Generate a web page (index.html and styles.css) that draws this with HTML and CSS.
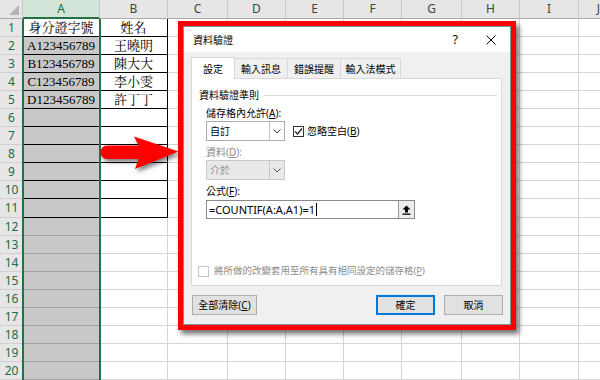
FILE: index.html
```html
<!DOCTYPE html>
<html lang="zh-Hant">
<head>
    <meta charset="UTF-8">
    <title>資料驗證</title>
    <link rel="stylesheet" href="styles.css">
</head>
<body>
<div class="screen">
    <!-- worksheet, cells filled in by the script below -->
    <div class="sheet" id="sheet"></div>
    <div class="selection"></div>

    <div class="frame">
        <div class="dialog">
            <div class="titlebar">
                <span class="title">資料驗證</span>
                <span class="help">?</span>
                <svg class="close" width="10" height="10" viewBox="0 0 10 10"><path d="M0.5 0.5L9.5 9.5M9.5 0.5L0.5 9.5" stroke="#000" stroke-width="1"/></svg>
            </div>
            <div class="body">
                <div class="tabs">
                    <div class="tab active">設定</div>
                    <div class="tab">輸入訊息</div>
                    <div class="tab">錯誤提醒</div>
                    <div class="tab wide">輸入法模式</div>
                </div>
                <div class="panel">
                    <div class="group-title"><span>資料驗證準則</span><i class="rule"></i></div>
                    <div class="fields">
                        <div class="label first">儲存格內允許(<u>A</u>):</div>
                        <div class="row">
                            <div class="combo">
                                <span class="value">自訂</span>
                                <span class="drop"><svg width="8" height="5" viewBox="0 0 8 5"><path d="M0.5 0.5L4 4L7.5 0.5" fill="none" stroke="#333" stroke-width="1"/></svg></span>
                            </div>
                            <div class="check">
                                <span class="box"><svg width="9" height="9" viewBox="0 0 9 9"><path d="M1 4.5L3.5 7L8 1.5" fill="none" stroke="#222" stroke-width="1.3"/></svg></span>
                                忽略空白(<u>B</u>)
                            </div>
                        </div>
                        <div class="label off">資料(<u>D</u>):</div>
                        <div class="combo off">
                            <span class="value">介於</span>
                            <span class="drop"><svg width="8" height="5" viewBox="0 0 8 5"><path d="M0.5 0.5L4 4L7.5 0.5" fill="none" stroke="#555" stroke-width="1"/></svg></span>
                        </div>
                        <div class="label">公式(<u>F</u>):</div>
                        <div class="formula">
                            <span class="text">=COUNTIF(A:A,A1)=1</span><span class="caret"></span>
                            <span class="ref"><svg width="9" height="10" viewBox="0 0 9 10"><path d="M4.5 0.5L8.5 4.5H6V7.5H3V4.5H0.5Z" fill="#000"/><rect x="0.5" y="8.5" width="8" height="1.3" fill="#000"/></svg></span>
                        </div>
                    </div>
                    <div class="check apply off">
                        <span class="box"></span>
                        將所做的改變套用至所有具有相同設定的儲存格(<u>P</u>)
                    </div>
                </div>
                <div class="buttons">
                    <button class="btn wide">全部清除(<u>C</u>)</button>
                    <span class="spacer"></span>
                    <button class="btn default">確定</button>
                    <button class="btn">取消</button>
                </div>
            </div>
        </div>
    </div>

    <svg class="arrow" width="88" height="44" viewBox="96 132 88 44">
        <path d="M107 145.5H138.5L134 136.5L178.5 151.5L135 169L138.5 159H107A6.75 6.75 0 0 1 107 145.5Z" fill="#ff0000"/>
    </svg>
</div>

<script>
    // Column letters and the few cells that hold data
    const letters = ['A', 'B', 'C', 'D', 'E', 'F', 'G', 'H', 'I', 'J'];
    const cells = {
        A1: '身分證字號', B1: '姓名',
        A2: 'A123456789', B2: '王曉明',
        A3: 'B123456789', B3: '陳大大',
        A4: 'C123456789', B4: '李小雯',
        A5: 'D123456789', B5: '許丁丁'
    };

    let html = '<div class="corner"><i></i></div>';
    letters.forEach(l => {
        html += `<div class="colhead${l === 'A' ? ' on' : ''}">${l}</div>`;
    });

    for (let r = 1; r <= 20; r++) {
        html += `<div class="rowhead">${r}</div>`;
        letters.forEach(l => {
            let cls = 'cell';
            if (l === 'A' && r > 1) cls += ' shaded';   // selected column, minus the active cell
            if ((l === 'A' || l === 'B') && r <= 11) cls += ' boxed'; // table with black borders
            html += `<div class="${cls}">${cells[l + r] || ''}</div>`;
        });
    }

    document.getElementById('sheet').innerHTML = html;
</script>
</body>
</html>
```

FILE: styles.css
```css
body {
    margin: 0;
    background: #fff;
}
.screen {
    position: relative;
    width: 600px;
    height: 380px;
    overflow: hidden;
}

/* worksheet */
.sheet {
    display: grid;
    grid-template-columns: 23px 77px 68px 60px 58px 58px 58px 60px 58px 59px 40px;
    grid-template-rows: 19px;
    grid-auto-rows: 18.05px;
    font-family: "Liberation Serif", "Noto Serif CJK TC", "Noto Sans CJK TC", serif;
    font-size: 13px;
}
.corner {
    background: #e6e6e6;
    border-right: 1px solid #c6c6c6;
    border-bottom: 1px solid #ababab;
    display: flex;
    align-items: flex-end;
    justify-content: flex-end;
    padding: 0 3px 3px 0;
}
.corner i {
    width: 0;
    height: 0;
    border-left: 10px solid transparent;
    border-bottom: 10px solid #b5b5b5;
}
.colhead {
    background: #e6e6e6;
    border-right: 1px solid #c9c9c9;
    border-bottom: 1px solid #ababab;
    color: #444;
    font-family: "Noto Sans", sans-serif;
    font-size: 12px;
    line-height: 18px;
    text-align: center;
}
.colhead.on {
    background: #d3e4d8;
    color: #1e6b41;
    border-bottom: 2px solid #217346;
}
.rowhead {
    background: #e6e6e6;
    border-bottom: 1px solid #cfcfcf;
    color: #1e6b41;
    font-family: "Noto Sans", sans-serif;
    font-size: 12px;
    line-height: 17px;
    text-align: center;
}
.cell {
    border-right: 1px solid #d4d4d4;
    border-bottom: 1px solid #d4d4d4;
    line-height: 17px;
    text-align: center;
    color: #000;
    white-space: nowrap;
    overflow: hidden;
}
.cell.shaded {
    background: #c8c8c8;
    border-bottom-color: #a2a2a2;
}
.cell.boxed {
    border-right-color: #000;
    border-bottom-color: #000;
}
.selection {
    position: absolute;
    left: 22px;
    top: 19px;
    width: 79px;
    height: 370px;
    box-sizing: border-box;
    border-left: 2px solid #217346;
    border-right: 2px solid #217346;
}

/* red arrow */
.arrow {
    position: absolute;
    left: 96px;
    top: 132px;
    filter: drop-shadow(2px 3px 2px rgba(0, 0, 0, 0.5));
}

/* dialog */
.frame {
    position: absolute;
    left: 178px;
    top: 21px;
    width: 338px;
    height: 309px;
    box-sizing: border-box;
    border: 5px solid #ff0000;
    box-shadow: 3px 4px 5px rgba(0, 0, 0, 0.55);
}
.dialog {
    height: 100%;
    box-sizing: border-box;
    border: 1px solid #6f9896;
    background: #f0f0f0;
    display: flex;
    flex-direction: column;
    font-family: "Noto Sans", "Noto Sans CJK TC", sans-serif;
    font-size: 10px;
    color: #000;
}
.titlebar {
    flex: none;
    height: 25px;
    background: #fff;
    display: flex;
    align-items: center;
    padding: 0 14px 0 9px;
}
.title {
    flex: 1;
    line-height: 12px;
}
.help {
    font-size: 12px;
    margin-right: 28px;
}
.close {
    display: block;
}
.body {
    flex: 1;
    display: flex;
    flex-direction: column;
    padding: 6px 8px 0 7px;
}
.tabs {
    display: flex;
    align-items: flex-end;
    height: 20px;
}
.tab {
    width: 54px;
    height: 20px;
    box-sizing: border-box;
    border: 1px solid #d9d9d9;
    border-bottom: none;
    margin-left: -1px;
    background: #f0f0f0;
    display: flex;
    align-items: center;
    justify-content: center;
    line-height: 12px;
}
.tab.wide {
    width: 61px;
}
.tab.active {
    width: 44px;
    height: 22px;
    margin: 0 0 -1px 0;
    background: #fff;
    position: relative;
    z-index: 1;
}
.panel {
    height: 208px;
    box-sizing: border-box;
    background: #fff;
    border: 1px solid #d9d9d9;
    padding: 10px 4px 8px 7px;
    display: flex;
    flex-direction: column;
}
.group-title {
    display: flex;
    align-items: center;
    line-height: 12px;
}
.rule {
    flex: 1;
    height: 1px;
    margin-left: 5px;
    background: #dcdcdc;
}
.fields {
    padding-left: 7px;
    display: flex;
    flex-direction: column;
    align-items: flex-start;
}
.label {
    line-height: 12px;
    margin-top: 5px;
}
.label.first {
    margin-top: 6px;
}
.fields .formula {
    margin-top: 3px;
}
.row {
    display: flex;
    align-items: center;
    margin-top: 2px;
}
.combo {
    width: 79px;
    height: 20px;
    box-sizing: border-box;
    border: 1px solid #acacac;
    background: #fff;
    display: flex;
}
.fields > .combo {
    margin-top: 2px;
}
.combo .value {
    flex: 1;
    padding-left: 3px;
    line-height: 18px;
}
.combo .drop {
    width: 14px;
    border-left: 1px solid #c4c4c4;
    display: flex;
    align-items: center;
    justify-content: center;
}
.combo.off {
    background: #e9e9e9;
    border-color: #c8c8c8;
    color: #8d8d8d;
}
.off {
    color: #8d8d8d;
}
.check {
    display: flex;
    align-items: center;
    line-height: 12px;
    margin-left: 8px;
}
.box {
    width: 11px;
    height: 11px;
    box-sizing: border-box;
    border: 1px solid #333;
    background: #fff;
    margin-right: 3px;
    display: flex;
    align-items: center;
    justify-content: center;
}
.check.apply {
    margin: auto 0 0 -1px;
    font-size: 9.5px;
}
.apply .box {
    border-color: #c4c4c4;
    margin-right: 5px;
}
.formula {
    width: 209px;
    height: 19px;
    box-sizing: border-box;
    border: 1px solid #8a8a8a;
    background: #fff;
    display: flex;
    align-items: center;
}
.formula .text {
    font-size: 11px;
    padding-left: 2px;
    line-height: 14px;
}
.caret {
    width: 1px;
    height: 13px;
    margin-left: 1px;
    background: #000;
}
.ref {
    margin-left: auto;
    width: 16px;
    height: 100%;
    box-sizing: border-box;
    border-left: 1px solid #9a9a9a;
    background: #ececec;
    display: flex;
    align-items: center;
    justify-content: center;
}
.buttons {
    display: flex;
    gap: 9px;
    margin: 9px -1px 0 1px;
}
.spacer {
    flex: 1;
}
.btn {
    width: 59px;
    height: 20px;
    padding: 0;
    border: 1px solid #adadad;
    background: #e1e1e1;
    font: inherit;
    line-height: 12px;
    color: #000;
}
.btn.wide {
    width: 65px;
}
.btn.default {
    border-color: #0078d7;
    box-shadow: inset 0 0 0 1px #0078d7;
}
```
